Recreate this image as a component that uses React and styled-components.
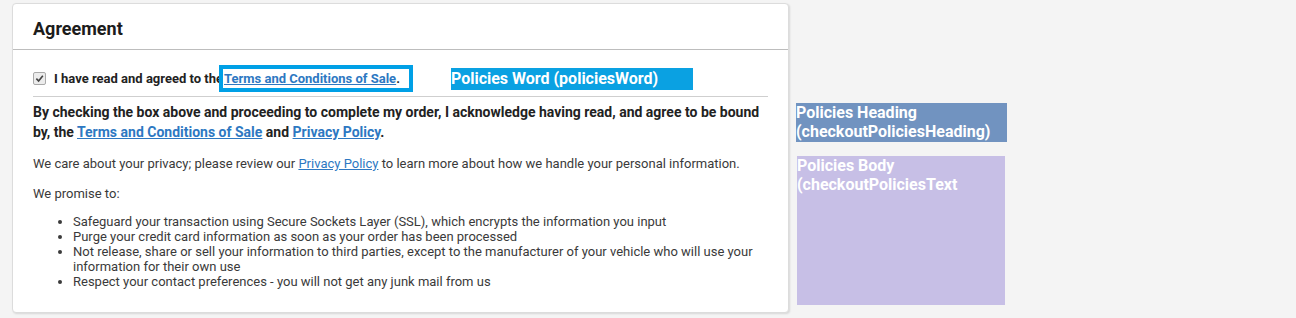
import React from "react";
import styled, { createGlobalStyle } from "styled-components";

const GlobalStyle = createGlobalStyle`
  html, body {
    margin: 0;
    background: #f4f4f4;
    font-family: Roboto, "Liberation Sans", sans-serif;
  }
`;

const Page = styled.div`
  display: flex;
  align-items: flex-start;
  gap: 7px;
  padding: 3px 0 0 12px;
  height: 318px;
  box-sizing: border-box;
`;

const Card = styled.section`
  width: 777px;
  height: 310px;
  box-sizing: border-box;
  background: #fff;
  border: 1px solid #dcdcdc;
  border-radius: 4px;
  box-shadow: 1px 1px 2px rgba(0, 0, 0, 0.12);
`;

const CardHeader = styled.header`
  height: 46px;
  box-sizing: border-box;
  padding: 3px 20px 0;
  display: flex;
  align-items: center;
  border-bottom: 1px solid #bdbdbd;
`;

const Title = styled.h2`
  margin: 0;
  font-size: 18px;
  font-weight: 700;
  color: #1c1c1c;
`;

const CardBody = styled.div`
  padding: 14px 20px 0;
`;

const AgreeRow = styled.div`
  display: flex;
  align-items: center;
  height: 29px;
  padding-bottom: 3px;
  border-bottom: 1px solid #cfcfcf;
`;

const Check = styled.span`
  width: 11px;
  height: 11px;
  border: 1px solid #a9a9a9;
  border-radius: 2px;
  background: #ececec;
  display: inline-flex;
  align-items: center;
  justify-content: center;
  margin-right: 8px;
`;

const AgreeText = styled.span`
  font-size: 13px;
  font-weight: 700;
  color: #222;
`;

const Link = styled.a`
  color: #2d78c2;
  text-decoration: underline;
  font-weight: ${(p) => (p.$bold ? 700 : 400)};
`;

const Highlight = styled.span`
  display: inline-block;
  position: relative;
  margin-left: -4px;
  padding: 0 9px 0 1px;
  line-height: 18px;
  border: 4px solid #00a0e6;
  background: #fff;
`;

const WordTag = styled.span`
  margin-left: 38px;
  margin-top: 1px;
  width: 242px;
  height: 22px;
  line-height: 22px;
  background: #0aa1e2;
  color: #fff;
  font-size: 16px;
  font-weight: 700;
`;

const Lead = styled.p`
  margin: 5px 0 0;
  font-size: 14px;
  line-height: 20px;
  font-weight: 700;
  color: #222;
`;

const Para = styled.p`
  margin: ${(p) => p.$gap}px 0 0;
  font-size: 13px;
  line-height: 18px;
  color: #3a3a3a;
`;

const List = styled.ul`
  margin: 11px 0 0;
  padding-left: 40px;
  font-size: 13px;
  line-height: 15px;
  color: #3a3a3a;
`;

const Side = styled.aside`
  display: flex;
  flex-direction: column;
  padding-top: 100px;
`;

const Tag = styled.div`
  width: ${(p) => p.$w}px;
  height: ${(p) => p.$h}px;
  margin-left: ${(p) => p.$x || 0}px;
  margin-top: ${(p) => p.$top || 0}px;
  background: ${(p) => p.$bg};
  color: #fff;
  font-size: 16px;
  font-weight: 700;
  line-height: 19px;
`;

export default function App() {
  return (
    <>
      <GlobalStyle />
      <Page>
        <Card>
          <CardHeader>
            <Title>Agreement</Title>
          </CardHeader>
          <CardBody>
            <AgreeRow>
              <Check>
                <svg width="9" height="9" viewBox="0 0 10 10">
                  <path d="M1.5 5.2 L4 7.7 L8.7 2" fill="none" stroke="#444" strokeWidth="1.8" />
                </svg>
              </Check>
              <AgreeText>I have read and agreed to the</AgreeText>
              <Highlight>
                <AgreeText>
                  <Link $bold href="#">Terms and Conditions of Sale</Link>.
                </AgreeText>
              </Highlight>
              <WordTag>Policies Word (policiesWord)</WordTag>
            </AgreeRow>
            <Lead>
              By checking the box above and proceeding to complete my order, I acknowledge having read, and agree to be bound
              by, the <Link $bold href="#">Terms and Conditions of Sale</Link> and <Link $bold href="#">Privacy Policy</Link>.
            </Lead>
            <Para $gap={13}>
              We care about your privacy; please review our <Link href="#">Privacy Policy</Link> to learn more about how we
              handle your personal information.
            </Para>
            <Para $gap={12}>We promise to:</Para>
            <List>
              <li>Safeguard your transaction using Secure Sockets Layer (SSL), which encrypts the information you input</li>
              <li>Purge your credit card information as soon as your order has been processed</li>
              <li>
                Not release, share or sell your information to third parties, except to the manufacturer of your vehicle who
                will use your information for their own use
              </li>
              <li>Respect your contact preferences - you will not get any junk mail from us</li>
            </List>
          </CardBody>
        </Card>
        <Side>
          <Tag $w={211} $h={39} $bg="#7193c0">
            Policies Heading (checkoutPoliciesHeading)
          </Tag>
          <Tag $w={208} $h={149} $x={1} $top={14} $bg="#c7bfe6">
            Policies Body (checkoutPoliciesText
          </Tag>
        </Side>
      </Page>
    </>
  );
}
